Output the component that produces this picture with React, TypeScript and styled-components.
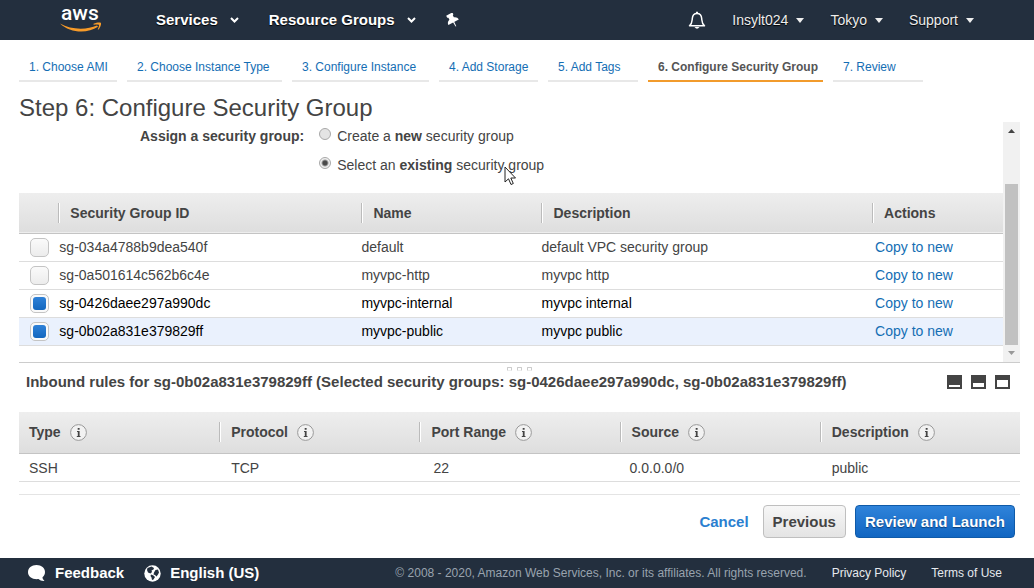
import React, { useState } from 'react';
import styled, { createGlobalStyle, css } from 'styled-components';

const SANS = '"Liberation Sans", Arial, Helvetica, sans-serif';
const INK = '#444444';
const NAVY = '#232f3e';
const LINK = '#146eb4';

const GlobalStyle = createGlobalStyle`
  *, *::before, *::after { box-sizing: border-box; }
  html, body, #root { height: 100%; }
  body { margin: 0; background: #ffffff; color: ${INK}; font: 14px/20px ${SANS}; }
  button, input { font: inherit; }
  button { margin: 0; padding: 0; border: 0; background: none; color: inherit; cursor: pointer; }
  a { color: ${LINK}; text-decoration: none; }
`;

const Page = styled.div`
  display: flex;
  flex-direction: column;
  min-height: 100vh;
`;

/* ---------- top bar ---------- */
const TopBar = styled.header`
  display: flex;
  align-items: center;
  height: 40px;
  padding: 0 60px 0 59px;
  background: ${NAVY};
  color: #ffffff;
`;
const LogoLink = styled.a`
  display: flex;
  margin-right: 54px;
`;
const NavGroup = styled.nav`
  display: flex;
  align-items: center;
  gap: 30px;
`;
const AccountGroup = styled(NavGroup)`
  gap: 26px;
  margin-left: auto;
`;
const NavButton = styled.button`
  display: flex;
  align-items: center;
  gap: 12px;
  font-size: 15px;
  font-weight: bold;
  text-shadow: 0 1px 1px #000000;
`;
const AccountButton = styled(NavButton)`
  gap: 8px;
  font-size: 14px;
  font-weight: normal;
  color: #eeeeee;
`;
const IconButton = styled.button`
  display: flex;
  align-items: center;
`;

/* ---------- wizard ---------- */
const Content = styled.main`
  flex: 1;
  padding: 15px 14px 20px 19px;
`;
const Steps = styled.nav`
  display: grid;
  grid-template-columns: 98px 155px 137px 99px 90px 175px 90px;
  gap: 10px;
`;
const Step = styled.a<{ $current?: boolean }>`
  height: 27px;
  padding: 2px 0 0 10px;
  border-bottom: 2px solid ${p => (p.$current ? '#f29b2c' : '#e8e8e8')};
  color: ${p => (p.$current ? '#555555' : LINK)};
  font-size: 12px;
  font-weight: ${p => (p.$current ? 'bold' : 'normal')};
  white-space: nowrap;
`;
const Title = styled.h1`
  margin: 11px 0 0;
  font-size: 24px;
  line-height: 29px;
  font-weight: normal;
`;
const Pane = styled.section`
  display: flex;
  border-bottom: 1px solid #cccccc;
`;
const PaneBody = styled.div`
  flex: 1;
  min-width: 0;
  padding-bottom: 16px;
`;

const Assign = styled.fieldset`
  display: flex;
  gap: 15px;
  margin: 0 0 18px;
  padding: 4px 0 0 121px;
  border: 0;
`;
const AssignLabel = styled.span`
  font-weight: bold;
`;
const Options = styled.div`
  position: relative;
  display: flex;
  flex-direction: column;
  gap: 9px;
`;
const Option = styled.label`
  display: flex;
  align-items: flex-start;
  gap: 6px;
`;
const Radio = styled.input`
  appearance: none;
  width: 12px;
  height: 12px;
  margin: 2px 0 0;
  border: 1px solid #a8a8a8;
  border-radius: 50%;
  background: #e4e4e4;
  &:checked {
    background: radial-gradient(circle, #4a4a4a 0 2px, #f0f0f0 4px);
  }
`;
const Pointer = styled.svg`
  position: absolute;
  left: 185px;
  top: 40px;
`;

/* ---------- tables ---------- */
const Grid = styled.table`
  width: 100%;
  border-collapse: collapse;
  table-layout: fixed;
`;
const HeadRow = styled.tr<{ $tall?: boolean }>`
  height: ${p => (p.$tall ? 42 : 40)}px;
  background: linear-gradient(#eeeeee, #dedede);
  border-bottom: 1px solid #c4c4c4;
`;
const HeadCell = styled.th<{ $first?: boolean }>`
  padding: 0;
  text-align: left;
  div {
    display: flex;
    align-items: center;
    gap: 9px;
    height: 20px;
    padding-left: ${p => (p.$first ? '10px' : '11px')};
    border-left: ${p => (p.$first ? '0' : '1px solid #bbbbbb')};
    box-shadow: ${p => (p.$first ? 'none' : 'inset 1px 0 #ffffff')};
  }
`;
const Row = styled.tr<{ $checked?: boolean; $active?: boolean }>`
  height: 28px;
  border-bottom: 1px solid #dddddd;
  background: ${p => (p.$active ? '#eaf1fd' : 'transparent')};
  color: ${p => (p.$checked ? '#000000' : INK)};
`;
const Cell = styled.td<{ $indent?: number }>`
  padding: 0 0 0 ${p => p.$indent ?? 0}px;
  white-space: nowrap;
`;
const Check = styled.input`
  appearance: none;
  display: block;
  width: 19px;
  height: 19px;
  margin: 0 0 0 11px;
  border: 1px solid #c4c4c4;
  border-radius: 5px;
  background: linear-gradient(#fafafa, #ececec);
  &:checked {
    padding: 2px;
    background: #fafafa;
  }
  &:checked::before {
    content: '';
    display: block;
    height: 13px;
    border-radius: 3px;
    background: linear-gradient(#2e81d8, #1467be);
  }
`;

/* ---------- scroll bar ---------- */
const ScrollTrack = styled.div`
  display: flex;
  flex-direction: column;
  align-items: center;
  width: 17px;
  background: #f1f1f1;
`;
const ScrollButton = styled.button`
  display: flex;
  align-items: center;
  justify-content: center;
  width: 17px;
  height: 17px;
`;
const ScrollRail = styled.div`
  flex: 1;
  display: flex;
  flex-direction: column;
  justify-content: flex-end;
`;
const ScrollThumb = styled.div`
  width: 13px;
  height: 78%;
  background: #c1c1c1;
`;

/* ---------- rules ---------- */
const Grip = styled.div`
  display: flex;
  justify-content: center;
  gap: 5px;
  height: 9px;
  padding-top: 4px;
  i { width: 5px; height: 4px; border: 1px solid #cccccc; border-bottom-color: #eeeeee; border-radius: 1px; }
`;
const RulesBar = styled.div`
  display: flex;
  align-items: center;
  justify-content: space-between;
  margin-bottom: 20px;
  padding: 0 10px 0 7px;
  h2 { margin: 0; font-size: 15px; line-height: 20px; }
`;
const PaneSizes = styled.div`
  display: flex;
  gap: 9px;
`;
const Actions = styled.div`
  display: flex;
  align-items: center;
  justify-content: flex-end;
  gap: 9px;
  margin-top: 12px;
  padding: 10px 5px 0 0;
  border-top: 1px solid #e4e4e4;
`;
const Button = styled.button<{ $kind: 'link' | 'plain' | 'primary' }>`
  height: 33px;
  padding: 0 9px;
  border-radius: 4px;
  font-size: 15px;
  font-weight: bold;
  ${p => p.$kind === 'link' && css`padding: 0 5px; color: #2b7fd0;`}
  ${p => p.$kind === 'plain' && css`
    border: 1px solid #bfbfbf;
    background: linear-gradient(#f7f7f7, #e4e4e4);
  `}
  ${p => p.$kind === 'primary' && css`
    border: 1px solid #0f5aa8;
    background: linear-gradient(#2f83da, #1166c2);
    color: #ffffff;
    text-shadow: 0 1px 1px #0a3f7a;
  `}
`;

/* ---------- footer ---------- */
const Footer = styled.footer`
  display: flex;
  align-items: center;
  height: 30px;
  padding: 0 32px 0 28px;
  background: ${NAVY};
  color: #ffffff;
`;
const FooterButton = styled.button`
  display: flex;
  align-items: center;
  gap: 9px;
  margin-right: 20px;
  font-size: 15px;
  font-weight: bold;
`;
const Legal = styled.div`
  display: flex;
  gap: 25px;
  margin-left: auto;
  color: #99a3ae;
  font-size: 12px;
  a { color: #e6eaee; }
`;

/* ---------- drawings ---------- */
const AwsLogo = () => (
  <svg width="43" height="40" viewBox="0 0 43 40" role="img" aria-label="aws">
    <text x="2" y="20" fill="#fff" fontFamily="Roboto, sans-serif" fontSize="21" fontWeight="500">aws</text>
    <g transform="translate(0 5)" fill="#f79b29">
      <path d="M1 18.500C12 25 28 25 38 20.500L39 21.800C28 29 11 28 1 18.500Z" />
      <path d="M34.500 18.800C38 17.400 41 17.200 42 18C42.500 19.500 41 23 39.300 24.800L38.700 24.300C40 21.800 40.300 20.300 39.900 19.700C38.700 19.300 37 19.400 34.600 19.700Z" />
    </g>
  </svg>
);
const Chevron = () => (
  <svg width="9" height="6" viewBox="0 0 9 6" aria-hidden="true">
    <path d="M1 1L4.500 4.500L8 1" fill="none" stroke="#fff" strokeWidth="2" />
  </svg>
);
const Caret = () => (
  <svg width="8" height="5" viewBox="0 0 8 5" aria-hidden="true"><path d="M0 0H8L4 5Z" fill="#eee" /></svg>
);
const Pin = () => (
  <svg width="14" height="14" viewBox="0 0 14 14" aria-hidden="true">
    <g transform="rotate(-28 7 7)" fill="#fff">
      <path d="M3 0H10V2.200L9 2.800V5C11 5.600 12.400 7 12.400 9.200H.6C.6 7 2 5.600 4 5V2.800L3 2.200Z" />
      <path d="M5.900 9H7.300L7 14H6.200Z" />
    </g>
  </svg>
);
const Bell = () => (
  <svg width="18" height="19" viewBox="0 0 18 19" aria-hidden="true">
    <path d="M1.500 14.800C4.300 12.500 4 10.500 4.300 7.500C4.500 4.500 6.500 2.500 9 2.500S13.500 4.500 13.700 7.500C14 10.500 13.700 12.500 16.500 14.800Z" fill="none" stroke="#fff" strokeWidth="1.500" strokeLinejoin="round" />
    <path d="M9 .8V2.500" stroke="#fff" strokeWidth="2" />
    <path d="M6.500 16H11.500Q9 19.500 6.500 16Z" fill="#fff" />
  </svg>
);
const Info = () => (
  <svg width="17" height="17" viewBox="0 0 17 17" aria-hidden="true">
    <circle cx="8.500" cy="8.500" r="7.900" fill="#f2f2f2" stroke="#999" />
    <path d="M7 7H9.600V12H10.500V13H6.800V12H7.800V8H7ZM7.700 4H9.600V5.800H7.700Z" fill="#444" />
  </svg>
);
const PaneIcon = ({ top, height }: { top: number; height: number }) => (
  <svg width="15" height="14" viewBox="0 0 15 14" aria-hidden="true">
    <rect width="15" height="14" fill="#444" />
    <rect x="2" y={top} width="11" height={height} fill="#fff" />
  </svg>
);
const Speech = () => (
  <svg width="18" height="17" viewBox="0 0 18 17" aria-hidden="true">
    <path d="M8.500 0C13.500 0 17 3 17 7C17 9.500 16 11 14.500 12.300C14.500 14 15.500 15 16.500 16C14 16.300 12 15.500 10.500 14.100C4.500 14.800 0 11.500 0 7.200C0 3 3.500 0 8.500 0Z" fill="#fff" />
  </svg>
);
const Globe = () => (
  <svg width="17" height="17" viewBox="0 0 17 17" aria-hidden="true">
    <circle cx="8.500" cy="8.500" r="8.200" fill="#fff" />
    <path d="M3.500 3L7.500 1.500L10 3L9.500 4.500L7.500 5.500L8 7L6.500 8.500L4 7.500L3 5ZM11.500 5L14 4.500L15 7.500L14 9.500L12.500 11.500L11 10L9.500 9.500L10 7.500ZM7 9.500L9.500 10.500L11 12L9.500 14.500L8 15L7.500 12.500L6.500 11Z" fill={NAVY} />
  </svg>
);

/* ---------- data ---------- */
const steps = ['1. Choose AMI', '2. Choose Instance Type', '3. Configure Instance', '4. Add Storage', '5. Add Tags', '6. Configure Security Group', '7. Review'];
const groups = [
  { id: 'sg-034a4788b9dea540f', name: 'default', description: 'default VPC security group' },
  { id: 'sg-0a501614c562b6c4e', name: 'myvpc-http', description: 'myvpc http' },
  { id: 'sg-0426daee297a990dc', name: 'myvpc-internal', description: 'myvpc internal' },
  { id: 'sg-0b02a831e379829ff', name: 'myvpc-public', description: 'myvpc public' },
];
const ACTIVE = 'sg-0b02a831e379829ff';

export default function App() {
  const [selected, setSelected] = useState<string[]>(['sg-0426daee297a990dc', ACTIVE]);
  const [mode, setMode] = useState('existing');
  const toggle = (id: string) =>
    setSelected(s => (s.includes(id) ? s.filter(x => x !== id) : [...s, id]));

  return (
    <Page>
      <GlobalStyle />
      <TopBar>
        <LogoLink href="#home"><AwsLogo /></LogoLink>
        <NavGroup>
          <NavButton>Services <Chevron /></NavButton>
          <NavButton>Resource Groups <Chevron /></NavButton>
          <IconButton aria-label="Pin shortcuts"><Pin /></IconButton>
        </NavGroup>
        <AccountGroup>
          <IconButton aria-label="Notifications"><Bell /></IconButton>
          <AccountButton>Insylt024 <Caret /></AccountButton>
          <AccountButton>Tokyo <Caret /></AccountButton>
          <AccountButton>Support <Caret /></AccountButton>
        </AccountGroup>
      </TopBar>

      <Content>
        <Steps>
          {steps.map((s, i) => <Step key={s} href={`#step-${i + 1}`} $current={i === 5}>{s}</Step>)}
        </Steps>
        <Title>Step 6: Configure Security Group</Title>

        <Pane>
          <PaneBody>
            <Assign aria-labelledby="assign">
              <AssignLabel id="assign">Assign a security group:</AssignLabel>
              <Options>
                <Option>
                  <Radio type="radio" name="mode" checked={mode === 'new'} onChange={() => setMode('new')} />
                  <span>Create a <b>new</b> security group</span>
                </Option>
                <Option>
                  <Radio type="radio" name="mode" checked={mode === 'existing'} onChange={() => setMode('existing')} />
                  <span>Select an <b>existing</b> security group</span>
                </Option>
                <Pointer width="13" height="20" viewBox="0 0 13 20" aria-hidden="true">
                  <path d="M1 1V16L4.500 12.800L7 18.500L9.300 17.500L6.800 12H11.500Z" fill="#fff" stroke="#222" />
                </Pointer>
              </Options>
            </Assign>
            <Grid>
              <colgroup>
                <col style={{ width: '4%' }} /><col style={{ width: '30.8%' }} /><col style={{ width: '18.3%' }} />
                <col style={{ width: '33.6%' }} /><col />
              </colgroup>
              <thead>
                <HeadRow>
                  <HeadCell $first aria-label="Selected" />
                  <HeadCell><div>Security Group ID</div></HeadCell>
                  <HeadCell><div>Name</div></HeadCell>
                  <HeadCell><div>Description</div></HeadCell>
                  <HeadCell><div>Actions</div></HeadCell>
                </HeadRow>
              </thead>
              <tbody>
                {groups.map(g => (
                  <Row key={g.id} $checked={selected.includes(g.id)} $active={g.id === ACTIVE}>
                    <Cell><Check type="checkbox" aria-label={g.id} checked={selected.includes(g.id)} onChange={() => toggle(g.id)} /></Cell>
                    <Cell $indent={1}>{g.id}</Cell>
                    <Cell>{g.name}</Cell>
                    <Cell>{g.description}</Cell>
                    <Cell $indent={3}><a href="#copy">Copy to new</a></Cell>
                  </Row>
                ))}
              </tbody>
            </Grid>
          </PaneBody>
          <ScrollTrack>
            <ScrollButton aria-label="Scroll up">
              <svg width="7" height="4" viewBox="0 0 7 4"><path d="M0 4L3.500 0L7 4Z" fill="#444" /></svg>
            </ScrollButton>
            <ScrollRail><ScrollThumb /></ScrollRail>
            <ScrollButton aria-label="Scroll down">
              <svg width="7" height="4" viewBox="0 0 7 4"><path d="M0 0L3.500 4L7 0Z" fill="#999" /></svg>
            </ScrollButton>
          </ScrollTrack>
        </Pane>

        <Grip><i /><i /><i /></Grip>
        <RulesBar>
          <h2>Inbound rules for {ACTIVE} (Selected security groups: {selected.join(', ')})</h2>
          <PaneSizes>
            <IconButton aria-label="Small pane"><PaneIcon top={10} height={2} /></IconButton>
            <IconButton aria-label="Half pane"><PaneIcon top={8} height={4} /></IconButton>
            <IconButton aria-label="Full pane"><PaneIcon top={5} height={7} /></IconButton>
          </PaneSizes>
        </RulesBar>

        <Grid>
          <thead>
            <HeadRow $tall>
              {['Type', 'Protocol', 'Port Range', 'Source', 'Description'].map((h, i) => (
                <HeadCell key={h} $first={i === 0}><div>{h} <Info /></div></HeadCell>
              ))}
            </HeadRow>
          </thead>
          <tbody>
            <Row>
              <Cell $indent={10}>SSH</Cell>
              <Cell $indent={12}>TCP</Cell>
              <Cell $indent={14}>22</Cell>
              <Cell $indent={10}>0.0.0.0/0</Cell>
              <Cell $indent={12}>public</Cell>
            </Row>
          </tbody>
        </Grid>

        <Actions>
          <Button $kind="link">Cancel</Button>
          <Button $kind="plain">Previous</Button>
          <Button $kind="primary">Review and Launch</Button>
        </Actions>
      </Content>

      <Footer>
        <FooterButton><Speech />Feedback</FooterButton>
        <FooterButton><Globe />English (US)</FooterButton>
        <Legal>
          <span>© 2008 - 2020, Amazon Web Services, Inc. or its affiliates. All rights reserved.</span>
          <a href="#privacy">Privacy Policy</a>
          <a href="#terms">Terms of Use</a>
        </Legal>
      </Footer>
    </Page>
  );
}
